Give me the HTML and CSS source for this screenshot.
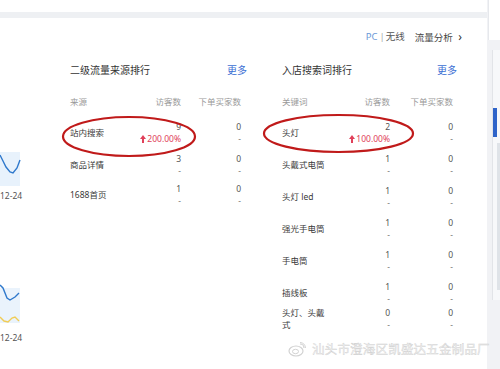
FILE: index.html
```html
<!DOCTYPE html>
<html lang="zh-CN">
<head>
<meta charset="utf-8">
<title>流量分析</title>
<link rel="stylesheet" href="styles.css">
</head>
<body>
<div class="page">
  <div class="main">
    <div class="topstrip"></div>
    <div class="band"></div>
    <div class="card">
      <div class="tabs">
        <span class="tab-pc">PC</span><span class="sep">|</span><span class="tab">无线</span>
        <span class="flow">流量分析 <span class="chev">&#x203A;</span></span>
      </div>
      <div class="content">
        <div class="charts">
          <svg class="chart1" width="22" height="34" viewBox="0 0 22 34">
            <rect x="0" y="0" width="20" height="34" fill="#e8f2fc"/>
            <polyline points="0,3 3,9 6,15 10,20 13,21 17,16 20,8" fill="none" stroke="#2e78cc" stroke-width="1.4"/>
          </svg>
          <div class="date">12-24</div>
          <svg class="chart2" width="22" height="44" viewBox="0 0 22 44">
            <rect x="0" y="8" width="20" height="35" fill="#eaf3fc"/>
            <polyline points="0,5 3,8 7,18 10,20 15,17 19,13" fill="none" stroke="#2e78cc" stroke-width="1.4"/>
            <polyline points="0,37 4,41 8,42 12,38 15,37 19,41" fill="none" stroke="#f0cc55" stroke-width="1.4"/>
          </svg>
          <div class="date date2">12-24</div>
        </div>

        <div class="panel panel-left">
          <div class="title-row"><span class="title">二级流量来源排行</span><span class="more">更多</span></div>
          <div class="grid grid-left head"><span>来源</span><span class="r">访客数</span><span class="r">下单买家数</span></div>
          <div class="grid grid-left row">
            <span class="label">站内搜索</span>
            <span class="r"><span class="v">9</span><span class="pct"><svg class="up" width="6" height="8" viewBox="0 0 6 8"><path d="M3 0 L6 4 L4 4 L4 8 L2 8 L2 4 L0 4 Z" fill="#e0405a"/></svg>200.00%</span></span>
            <span class="r"><span class="v">0</span><span class="d">-</span></span>
          </div>
          <div class="grid grid-left row">
            <span class="label">商品详情</span>
            <span class="r"><span class="v">3</span><span class="d">-</span></span>
            <span class="r"><span class="v">0</span><span class="d">-</span></span>
          </div>
          <div class="grid grid-left row row-short">
            <span class="label">1688首页</span>
            <span class="r"><span class="v">1</span><span class="d">-</span></span>
            <span class="r"><span class="v">0</span><span class="d">-</span></span>
          </div>
        </div>

        <div class="panel panel-right">
          <div class="title-row"><span class="title">入店搜索词排行</span><span class="more">更多</span></div>
          <div class="grid grid-right head"><span>关键词</span><span class="r">访客数</span><span class="r">下单买家数</span></div>
          <div class="grid grid-right row">
            <span class="label">头灯</span>
            <span class="r"><span class="v">2</span><span class="pct"><svg class="up" width="6" height="8" viewBox="0 0 6 8"><path d="M3 0 L6 4 L4 4 L4 8 L2 8 L2 4 L0 4 Z" fill="#e0405a"/></svg>100.00%</span></span>
            <span class="r"><span class="v">0</span><span class="d">-</span></span>
          </div>
          <div class="grid grid-right row">
            <span class="label">头戴式电筒</span>
            <span class="r"><span class="v">1</span><span class="d">-</span></span>
            <span class="r"><span class="v">0</span><span class="d">-</span></span>
          </div>
          <div class="grid grid-right row">
            <span class="label">头灯 led</span>
            <span class="r"><span class="v">1</span><span class="d">-</span></span>
            <span class="r"><span class="v">0</span><span class="d">-</span></span>
          </div>
          <div class="grid grid-right row">
            <span class="label">强光手电筒</span>
            <span class="r"><span class="v">1</span><span class="d">-</span></span>
            <span class="r"><span class="v">0</span><span class="d">-</span></span>
          </div>
          <div class="grid grid-right row">
            <span class="label">手电筒</span>
            <span class="r"><span class="v">1</span><span class="d">-</span></span>
            <span class="r"><span class="v">0</span><span class="d">-</span></span>
          </div>
          <div class="grid grid-right row">
            <span class="label">插线板</span>
            <span class="r"><span class="v">1</span><span class="d">-</span></span>
            <span class="r"><span class="v">0</span><span class="d">-</span></span>
          </div>
          <div class="grid grid-right row row-wrap">
            <span class="label label-wrap">头灯、头戴式</span>
            <span class="r"><span class="v">0</span><span class="d">-</span></span>
            <span class="r"><span class="v">0</span><span class="d">-</span></span>
          </div>
        </div>
      </div>
    </div>
  </div>
  <div class="side">
    <div class="side-top"></div>
    <div class="side-panel">
      <div class="thumb"></div>
      <div class="track"></div>
    </div>
  </div>

  <svg class="marks" width="500" height="369" viewBox="0 0 500 369">
    <ellipse cx="129" cy="136.5" rx="66" ry="19.5" fill="none" stroke="#c01a1a" stroke-width="2.2"/>
    <ellipse cx="338.5" cy="133.5" rx="74.5" ry="18.5" fill="none" stroke="#c01a1a" stroke-width="2.2"/>
  </svg>

  <div class="watermark">
    <svg class="wb" width="18" height="15" viewBox="0 0 18 15">
      <ellipse cx="8" cy="9" rx="7" ry="5" fill="none" stroke="#d2d2d2" stroke-width="1.2"/>
      <ellipse cx="7.5" cy="9.5" rx="3" ry="2.2" fill="none" stroke="#d2d2d2" stroke-width="1"/>
      <path d="M12 2 A4 4 0 0 1 16 6" fill="none" stroke="#d2d2d2" stroke-width="1.2"/>
      <path d="M12 0.5 A6 6 0 0 1 17.5 6" fill="none" stroke="#d2d2d2" stroke-width="1"/>
    </svg>
    <span class="wm-text">汕头市澄海区凯盛达五金制品厂</span>
  </div>
</div>
</body>
</html>
```

FILE: styles.css
```css
* { box-sizing: border-box; }
html, body { margin: 0; padding: 0; }
body {
  width: 500px;
  height: 369px;
  overflow: hidden;
  background: #ffffff;
  font-family: "Noto Sans", "Noto Sans CJK SC", sans-serif;
  color: #444;
}
.page {
  position: relative;
  display: flex;
  width: 500px;
  height: 369px;
  background: #f1f2f5;
}
.main {
  width: 488px;
  display: flex;
  flex-direction: column;
}
.topstrip { height: 12px; background: #fff; }
.band { height: 6px; background: #eef0f3; }
.card {
  flex: 1;
  background: #fff;
}
.tabs {
  height: 14px;
  margin-top: 12px;
  padding-right: 25px;
  display: flex;
  justify-content: flex-end;
  align-items: center;
  font-size: 9.5px;
  line-height: 14px;
  color: #555;
}
.tab-pc { color: #6c9ad8; }
.sep { color: #aaa; margin: 0 1px 0 2px; }
.flow { margin-left: 10px; color: #444; }
.chev { font-size: 12px; margin-left: 3px; color: #333; }

.content {
  display: flex;
  margin-top: 19px;
}
.charts {
  width: 70px;
  display: flex;
  flex-direction: column;
}
.chart1 { display: block; margin-top: 89px; }
.chart2 { display: block; margin-top: 78px; }
.date {
  margin-top: 4px;
  font-size: 8.5px;
  line-height: 12px;
  color: #555;
}
.date2 { margin-top: 8px; }

.panel { display: flex; flex-direction: column; }
.panel-left { width: 177px; }
.panel-right { width: 175px; margin-left: 35px; }

.title-row {
  display: flex;
  justify-content: space-between;
  align-items: center;
  height: 14px;
  line-height: 14px;
}
.title { font-size: 10px; color: #333; }
.more { font-size: 10px; color: #3c6fd4; }

.grid { display: grid; }
.grid-left { grid-template-columns: 71px 40px 60px; }
.grid-right { grid-template-columns: 68px 40px 63px; }
.r { text-align: right; display: flex; flex-direction: column; align-items: flex-end; }

.head {
  margin-top: 19px;
  font-size: 8.5px;
  line-height: 12px;
  color: #999;
  margin-bottom: 9px;
}
.row {
  height: 32px;
  padding: 4px 0;
  align-items: center;
  font-size: 8.5px;
  line-height: 12px;
  color: #3a3a3a;
}
.row-short { height: 28px; padding-top: 2px; padding-bottom: 2px; }
.row-wrap { height: 28px; padding: 0; margin-top: -2px; align-items: start; }
.label { color: #3a3a3a; }
.label-wrap { width: 44px; }
.v { color: #555; }
.d { color: #777; line-height: 12px; }
.pct {
  color: #e0405a;
  display: flex;
  align-items: center;
  gap: 1px;
  white-space: nowrap;
}
.up { display: block; }

.side {
  flex: 1;
  display: flex;
  flex-direction: column;
}
.side-top { height: 40px; background: #fff; margin-left: 1px; border-left: 1px solid #e6e8ec; }
.side-panel {
  margin-top: 10px;
  margin-left: 5px;
  height: 250px;
  border-left: 1px solid #e2e4e8;
  background: #f7f8fa;
  display: flex;
  flex-direction: column;
  align-items: flex-start;
}
.thumb { width: 4px; height: 29px; margin-top: 58px; background: #2f64c9; }
.track { width: 3px; height: 147px; margin-top: 6px; margin-left: 4px; background: #dfe3e8; }

.marks { position: absolute; left: 0; top: 0; pointer-events: none; }

.watermark {
  position: absolute;
  left: 288px;
  top: 341px;
  display: flex;
  align-items: center;
  gap: 6px;
}
.wb { display: block; }
.wm-text {
  font-family: "Noto Sans CJK SC", sans-serif;
  font-size: 12.5px;
  line-height: 16px;
  color: rgba(245, 245, 245, 0.9);
  -webkit-text-stroke: 0.4px #cfcfcf;
  letter-spacing: 0.2px;
}
```
